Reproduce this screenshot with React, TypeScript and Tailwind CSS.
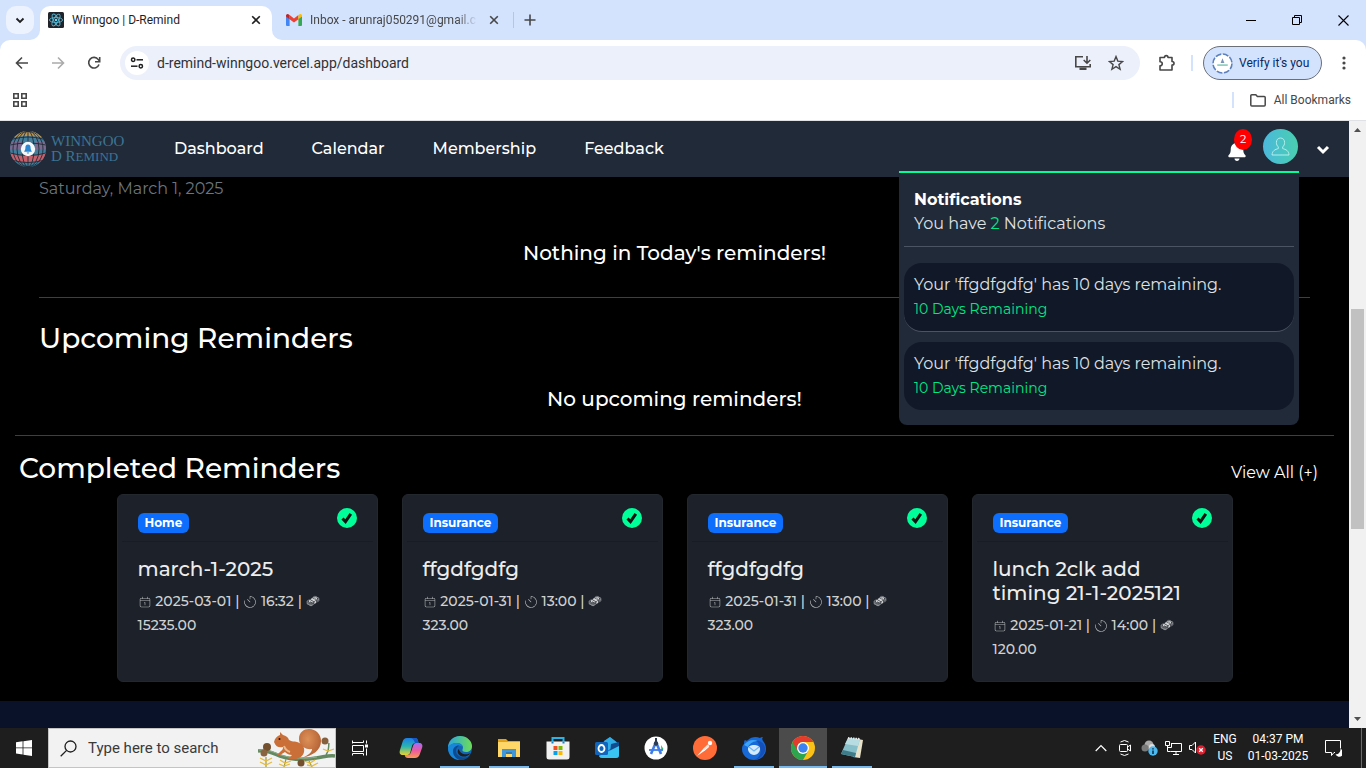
import React from "react";
import { FaBell } from "react-icons/fa";
import { CiCalendarDate, CiTimer } from "react-icons/ci";
import { GiMoneyStack } from "react-icons/gi";

type Reminder = {
  category: string;
  title: string;
  date: string;
  time: string;
  amount: string;
};

const reminders: Reminder[] = [
  { category: "Home", title: "march-1-2025", date: "2025-03-01", time: "16:32", amount: "15235.00" },
  { category: "Insurance", title: "ffgdfgdfg", date: "2025-01-31", time: "13:00", amount: "323.00" },
  { category: "Insurance", title: "ffgdfgdfg", date: "2025-01-31", time: "13:00", amount: "323.00" },
  { category: "Insurance", title: "lunch 2clk add timing 21-1-2025121", date: "2025-01-21", time: "14:00", amount: "120.00" },
];

const notifications = [
  { text: "Your 'ffgdfgdfg' has 10 days remaining.", left: "10 Days Remaining" },
  { text: "Your 'ffgdfgdfg' has 10 days remaining.", left: "10 Days Remaining" },
];

function ReactLogo() {
  return (
    <svg width="16" height="16" viewBox="0 0 16 16" aria-hidden="true">
      <rect width="16" height="16" rx="1.5" fill="#20232a" />
      <g fill="none" stroke="#58b4cf" strokeWidth="0.9">
        <ellipse cx="8" cy="8" rx="6.6" ry="2.5" />
        <ellipse cx="8" cy="8" rx="6.6" ry="2.5" transform="rotate(60 8 8)" />
        <ellipse cx="8" cy="8" rx="6.6" ry="2.5" transform="rotate(120 8 8)" />
      </g>
      <circle cx="8" cy="8" r="1.3" fill="#61dafb" />
    </svg>
  );
}

function GmailLogo() {
  return (
    <svg width="16" height="12" viewBox="0 0 16 12" aria-hidden="true">
      <path d="M0 2v9a1 1 0 0 0 1 1h2.6V4.6L0 2z" fill="#4285f4" />
      <path d="M16 2v9a1 1 0 0 1-1 1h-2.6V4.6L16 2z" fill="#34a853" />
      <path d="M3.6 1v4.2L8 8.6l4.4-3.4V1L8 4.4z" fill="#ea4335" />
      <path d="M0 1.8v.8l3.6 2.7V1L2.6.4C1.5-.4 0 .4 0 1.8z" fill="#c5221f" />
      <path d="M16 1.8v.8l-3.6 2.7V1l1-.6C14.5-.4 16 .4 16 1.8z" fill="#fbbc04" />
    </svg>
  );
}

function CloseIcon() {
  return (
    <svg width="10" height="10" viewBox="0 0 10 10" aria-hidden="true">
      <path d="M1.2 1.2l7.6 7.6M8.8 1.2L1.2 8.8" stroke="currentColor" strokeWidth="1.6" fill="none" />
    </svg>
  );
}

function TabStrip() {
  return (
    <div className="flex h-10 shrink-0 items-stretch bg-[#d3e2fd]">
      <div className="flex w-10 shrink-0 items-center pl-1.5">
        <button aria-label="Search tabs" className="flex h-7 w-7 items-center justify-center rounded-[10px] bg-[#ecf2fe] text-[#1f1f1f]">
          <svg width="10" height="7" viewBox="0 0 10 7" aria-hidden="true">
            <path d="M1.5 1.5L5 5l3.500-3.500" stroke="currentColor" strokeWidth="1.8" fill="none" />
          </svg>
        </button>
      </div>
      <div className="relative mt-1.5 flex w-[232px] shrink-0 items-center rounded-t-[10px] bg-white pb-1.5 pl-2 pr-[11px]">
        <svg className="absolute -left-2.5 bottom-0" width="10" height="10" viewBox="0 0 10 10" aria-hidden="true">
          <path d="M10 0v10H0A10 10 0 0 0 10 0z" fill="#fff" />
        </svg>
        <svg className="absolute -right-2.5 bottom-0" width="10" height="10" viewBox="0 0 10 10" aria-hidden="true">
          <path d="M0 0v10h10A10 10 0 0 1 0 0z" fill="#fff" />
        </svg>
        <ReactLogo />
        <span className="ml-2 flex-1 text-xs text-[#1f1f1f]">Winngoo | D-Remind</span>
        <button aria-label="Close tab" className="text-[#1f1f1f]"><CloseIcon /></button>
      </div>
      <div className="flex w-[241px] shrink-0 items-center pl-3.5 pr-3.5">
        <GmailLogo />
        <span className="ml-2 min-w-0 flex-1 whitespace-nowrap text-xs text-[#474747] [mask-image:linear-gradient(to_right,black_88%,transparent)]">
          Inbox - arunraj050291@gmail.c
        </span>
        <button aria-label="Close tab" className="ml-3 text-[#474747]"><CloseIcon /></button>
      </div>
      <div className="flex items-center gap-2.5">
        <span className="h-4 w-px bg-[#a8c7fa]" />
        <button aria-label="New tab" className="text-[#474747]">
          <svg width="12" height="12" viewBox="0 0 12 12" aria-hidden="true">
            <path d="M6 .5v11M.5 6h11" stroke="currentColor" strokeWidth="1.6" />
          </svg>
        </button>
      </div>
      <div className="ml-auto flex items-stretch text-black">
        <button aria-label="Minimize" className="flex w-[46px] items-center justify-center">
          <svg width="10" height="10" viewBox="0 0 10 10" aria-hidden="true"><path d="M0 5.5h10" stroke="currentColor" /></svg>
        </button>
        <button aria-label="Restore" className="flex w-[46px] items-center justify-center">
          <svg width="10" height="10" viewBox="0 0 10 10" aria-hidden="true">
            <path d="M.5 2.5h7v7h-7zM2.5 2.5v-2h7v7h-2" stroke="currentColor" fill="none" />
          </svg>
        </button>
        <button aria-label="Close window" className="flex w-[46px] items-center justify-center">
          <svg width="11" height="11" viewBox="0 0 11 11" aria-hidden="true"><path d="M.5.5l10 10M10.5.5l-10 10" stroke="currentColor" strokeWidth="1.1" /></svg>
        </button>
      </div>
    </div>
  );
}

function Toolbar() {
  return (
    <div className="flex h-[46px] shrink-0 items-center pl-2.5 pr-3 text-[#474747]">
      <button aria-label="Back" className="flex w-6 justify-center">
        <svg width="14" height="14" viewBox="0 0 14 14" aria-hidden="true"><path d="M13 7H2M7 1.5L1.5 7 7 12.5" stroke="currentColor" strokeWidth="1.6" fill="none" /></svg>
      </button>
      <button aria-label="Forward" className="ml-3 flex w-6 justify-center text-[#ababab]">
        <svg width="14" height="14" viewBox="0 0 14 14" aria-hidden="true"><path d="M1 7h11M7 1.5L12.5 7 7 12.5" stroke="currentColor" strokeWidth="1.6" fill="none" /></svg>
      </button>
      <button aria-label="Reload" className="ml-3 flex w-6 justify-center">
        <svg width="14" height="14" viewBox="0 0 14 14" aria-hidden="true">
          <path d="M12 8.5A5.3 5.3 0 1 1 11.3 3.6L12.5 5" stroke="currentColor" strokeWidth="1.6" fill="none" />
          <path d="M12.7 1v4.7H8" stroke="currentColor" strokeWidth="1.6" fill="none" />
        </svg>
      </button>
      <div className="ml-3.5 flex h-[34px] min-w-0 flex-1 items-center rounded-full bg-[#ecf0fa] pl-[5px] pr-4">
        <button aria-label="Site information" className="flex h-6 w-6 shrink-0 items-center justify-center rounded-full bg-white text-[#1f1f1f]">
          <svg width="14" height="14" viewBox="0 0 14 14" aria-hidden="true">
            <g stroke="currentColor" strokeWidth="1.5" fill="none">
              <circle cx="3.2" cy="3.8" r="1.7" /><path d="M6.5 3.8H13" />
              <circle cx="10.8" cy="10.2" r="1.7" /><path d="M1 10.2h6.5" />
            </g>
          </svg>
        </button>
        <input aria-label="Address" readOnly value="d-remind-winngoo.vercel.app/dashboard" className="ml-2 min-w-0 flex-1 bg-transparent text-sm text-[#303236] outline-none" />
        <button aria-label="Install app">
          <svg width="18" height="16" viewBox="0 0 18 16" aria-hidden="true">
            <path d="M9 1.8H1.8v10h14.4V9" stroke="currentColor" strokeWidth="1.6" fill="none" />
            <path d="M5.5 12.5h7V15h-7z" fill="currentColor" />
            <path d="M13 1v7M9.7 5L13 8.2 16.3 5" stroke="currentColor" strokeWidth="1.6" fill="none" />
          </svg>
        </button>
        <button aria-label="Bookmark this tab" className="ml-4">
          <svg width="16" height="16" viewBox="0 0 16 16" aria-hidden="true">
            <path d="M8 1.6l1.8 4.5 4.8.4-3.7 3.1 1.2 4.7L8 11.7l-4.1 2.6 1.2-4.7-3.7-3.1 4.8-.4z" stroke="currentColor" strokeWidth="1.4" fill="none" />
          </svg>
        </button>
      </div>
      <button aria-label="Extensions" className="ml-[18px]">
        <svg width="18" height="18" viewBox="0 0 18 18" aria-hidden="true">
          <path d="M2 3.5h4.500C6.500 1 10 1 10 3.500h4v4c2.700 0 2.700 3.600 0 3.600V16H2v-4.200c3 0 3-4 0-4z" stroke="currentColor" strokeWidth="1.6" fill="none" strokeLinejoin="round" />
        </svg>
      </button>
      <span className="ml-[15px] h-4 w-0.5 bg-[#d3e2fd]" />
      <button className="ml-2.5 flex h-[34px] w-[119px] items-center gap-1.5 rounded-full border border-[#6b7078] bg-[#d3e2fd] pl-2 text-xs text-[#0a2a5e]">
        <svg width="21" height="21" viewBox="0 0 20 20" aria-hidden="true">
          <circle cx="10" cy="10" r="9" fill="#fff" />
          <circle cx="10" cy="10" r="9" fill="none" stroke="#5b80bd" strokeWidth="1.5" strokeDasharray="5.6 1.47" />
          <path d="M10 5l1.8 4.5H8.200z" fill="#7c93b8" />
          <path d="M5 11.5h10" stroke="#6fc3ad" strokeWidth="1.3" />
        </svg>
        <span className="whitespace-nowrap">Verify it's you</span>
      </button>
      <button aria-label="Chrome menu" className="ml-3 flex w-5 justify-center">
        <svg width="4" height="14" viewBox="0 0 4 14" fill="currentColor" aria-hidden="true"><circle cx="2" cy="2" r="1.6" /><circle cx="2" cy="7" r="1.6" /><circle cx="2" cy="12" r="1.6" /></svg>
      </button>
    </div>
  );
}

function BookmarksBar() {
  return (
    <div className="flex h-[34px] shrink-0 items-center pb-1.5 pl-[13px] pr-[15px] text-[#474747]">
      <button aria-label="Tab groups">
        <svg width="14" height="14" viewBox="0 0 14 14" aria-hidden="true">
          <path d="M.8.8h4.400v4.400H.8zM8.800.8h4.400v4.400H8.800zM.8 8.800h4.400v4.400H.8zM8.800 8.800h4.400v4.400H8.800z" stroke="currentColor" strokeWidth="1.6" fill="none" />
        </svg>
      </button>
      <span className="ml-auto h-4 w-0.5 bg-[#d3e2fd]" />
      <button className="ml-4 flex items-center gap-2 text-xs">
        <svg width="16" height="13" viewBox="0 0 16 13" aria-hidden="true">
          <path d="M.8 11V1.800a1 1 0 0 1 1-1h4l1.600 1.800h6.800a1 1 0 0 1 1 1V11a1 1 0 0 1-1 1H1.800a1 1 0 0 1-1-1z" stroke="currentColor" strokeWidth="1.5" fill="none" />
        </svg>
        All Bookmarks
      </button>
    </div>
  );
}

function GlobeLogo() {
  return (
    <svg width="36" height="36" viewBox="0 0 36 36" aria-hidden="true">
      <defs><clipPath id="globe"><circle cx="18" cy="18" r="18" /></clipPath></defs>
      <g clipPath="url(#globe)">
        <rect width="36" height="36" fill="#427f9d" />
        <path d="M0 0h36v7q-18-4-36 0z" fill="#bd9650" />
        <path d="M0 10h11v8H0zM25 10h11v8H25z" fill="#7a6a90" />
        <path d="M0 22q18 5 36 0v7q-18 5-36 0z" fill="#c4616c" />
        <g fill="none" stroke="#212a38" strokeWidth="0.9">
          <path d="M3 8q15-4 30 0M0 14q18-4 36 0M0 22q18 5 36 0M2 29q16 5 32 0" />
          <path d="M18 0v36" />
          <ellipse cx="18" cy="18" rx="6" ry="18" />
          <ellipse cx="18" cy="18" rx="11" ry="18" />
          <ellipse cx="18" cy="18" rx="15" ry="18" />
        </g>
      </g>
      <circle cx="18" cy="18" r="7.2" fill="#f4f8fb" />
      <path d="M18 13.5c-2 0-2.600 1.600-2.600 3.400 0 2-1 2.600-1.300 3.800h7.800c-.3-1.200-1.300-1.800-1.300-3.800 0-1.800-.6-3.400-2.600-3.400zM16.800 21.400h2.400c0 1.500-2.400 1.500-2.400 0z" fill="#2c86d1" />
    </svg>
  );
}

function NotificationPanel() {
  return (
    <section aria-label="Notifications" className="absolute right-[50px] top-[50px] z-10 w-[400px] rounded-b-lg border-t-2 border-[#00ff99] bg-[#212a38] px-[5px] pb-[15px] text-base text-[#dfe1e4]">
      <div className="border-b border-[#4b5462] px-2.5 pb-2.5 pt-[15px]">
        <h2 className="font-bold leading-6 text-white">Notifications</h2>
        <p className="leading-6">You have <span className="text-[#00e887]">2</span> Notifications</p>
      </div>
      <ul className="mt-4 flex flex-col gap-2.5">
        {notifications.map((n, i) => (
          <li key={i} className="rounded-[18px] border-b border-[#4b5462] bg-[#111827] px-2.5 py-2.5 last:border-b-0">
            <p className="leading-6">{n.text}</p>
            <p className="text-sm leading-6 text-[#00e887]">{n.left}</p>
          </li>
        ))}
      </ul>
    </section>
  );
}

function NavBar() {
  return (
    <header className="relative flex h-14 shrink-0 items-center bg-[#212a38] pl-2.5 pr-[19px]">
      <a href="#home" className="flex items-center gap-[5px]">
        <GlobeLogo />
        <span className="w-[75px] whitespace-nowrap font-['Liberation_Serif',serif] text-[15px] leading-[15px] text-[#3c7594]">
          WINNGOO<br />D R<span className="text-[13px]">EMIND</span>
        </span>
      </a>
      <nav className="ml-12 flex gap-12 text-base font-medium text-white">
        <a href="#dashboard">Dashboard</a>
        <a href="#calendar">Calendar</a>
        <a href="#membership">Membership</a>
        <a href="#feedback">Feedback</a>
      </nav>
      <button aria-label="2 notifications" className="relative ml-auto mt-1 text-white">
        <FaBell size={20} />
        <span className="absolute -top-3 left-[7px] flex h-[21px] w-[18px] items-center justify-center rounded-[50%] bg-[#ff0000] text-[11px]">2</span>
      </button>
      <button aria-label="Profile" className="mb-1.5 ml-4 flex h-[35px] w-[35px] items-center justify-center rounded-full bg-linear-to-r from-[#4cb8dc] to-[#49cfae] text-[#b5eeee]">
        <svg width="19" height="19" viewBox="0 0 19 19" fill="none" stroke="currentColor" aria-hidden="true">
          <path d="M9.5 1C7 1 5.400 2.900 5.400 5.400c0 2 .7 3.500 1.900 4.500v1.700c-3.200.9-6 1.900-6.300 6.400h17c-.3-4.500-3.100-5.500-6.300-6.400V9.900c1.200-1 1.900-2.500 1.900-4.500C13.600 2.900 12 1 9.500 1z" />
        </svg>
      </button>
      <button aria-label="Open profile menu" className="ml-[18px] mt-0.5 text-white">
        <svg width="14" height="10" viewBox="0 0 14 10" aria-hidden="true"><path d="M2 2l5 5 5-5" stroke="currentColor" strokeWidth="3" fill="none" /></svg>
      </button>
      <NotificationPanel />
    </header>
  );
}

function ReminderCard({ item }: { item: Reminder }) {
  return (
    <article className="h-[188px] w-[261px] shrink-0 rounded-md border border-[#23272e] bg-[#1d2129] px-1">
      <div className="flex items-start justify-between border-b border-[#191d23] px-4 pb-2 pt-[13px]">
        <span className="mt-[5px] rounded-md bg-[#0d6efd] px-[7px] text-xs font-bold leading-5 text-white">{item.category}</span>
        <svg width="20" height="20" viewBox="0 0 20 20" role="img" aria-label="Completed">
          <circle cx="10" cy="10" r="10" fill="#00ff99" />
          <path d="M5.5 10.5l3 3.200 5.300-7.800" stroke="#111" strokeWidth="3" fill="none" />
        </svg>
      </div>
      <div className="px-4 pt-[15px]">
        <h3 className="text-xl font-medium leading-6 text-[#eceded]">{item.title}</h3>
        <p className="mt-2 text-sm font-medium leading-6 text-[#cfd1d3]">
          <CiCalendarDate className="inline-block h-3.5 w-3.5 align-[-3px] text-[#b5b8bb]" /> {item.date} |{" "}
          <CiTimer className="inline-block h-3.5 w-3.5 align-[-3px] text-[#c5c8cb]" /> {item.time} |{" "}
          <GiMoneyStack className="inline-block h-3.5 w-3.5 align-[-2px]" />
          <br />
          {item.amount}
        </p>
      </div>
    </article>
  );
}

function Dashboard() {
  return (
    <main className="flex min-h-0 flex-1 flex-col bg-black text-white">
      <section className="mx-[39px] border-b border-[#3f3f3f] pb-8">
        <p className="text-base leading-6 text-[#6c757d]">Saturday, March 1, 2025</p>
        <p className="mt-10 text-center text-xl font-medium leading-6">Nothing in Today's reminders!</p>
      </section>
      <section className="mx-[15px] border-b border-[#3f3f3f] px-6 pb-6 pt-[23px]">
        <h2 className="text-[28px] font-medium leading-[34px]">Upcoming Reminders</h2>
        <p className="mt-8 text-center text-xl font-medium leading-6">No upcoming reminders!</p>
      </section>
      <section className="pb-[19px] pt-[15px]">
        <div className="flex items-center justify-between pl-[19px] pr-[31px]">
          <h2 className="text-[28px] font-medium leading-[34px]">Completed Reminders</h2>
          <a href="#completed" className="mt-2.5 leading-6">View All (+)</a>
        </div>
        <div className="mt-[9px] flex justify-center gap-6">
          {reminders.map((r, i) => <ReminderCard key={i} item={r} />)}
        </div>
      </section>
      <footer className="flex-1 bg-[#0a1229]" />
    </main>
  );
}

function PageScrollbar() {
  return (
    <div aria-hidden="true" className="flex w-[17px] shrink-0 flex-col items-center bg-[#f1f1f1] px-0.5 text-[#505050]">
      <svg className="h-[17px] w-[7px] shrink-0" viewBox="0 0 7 17"><path d="M0 11l3.500-4L7 11z" fill="currentColor" /></svg>
      <span className="flex-[171]" />
      <span className="w-full flex-[220] bg-[#c1c1c1]" />
      <span className="flex-[182]" />
      <svg className="h-[17px] w-[7px] shrink-0" viewBox="0 0 7 17"><path d="M0 6l3.500 4L7 6z" fill="currentColor" /></svg>
    </div>
  );
}

function Squirrel() {
  return (
    <svg width="77" height="38" viewBox="0 0 77 38" aria-hidden="true">
      <defs>
        <radialGradient id="tail" cx=".4" cy=".35" r=".8"><stop offset="0" stopColor="#dd9058" /><stop offset="1" stopColor="#a9552a" /></radialGradient>
      </defs>
      <path d="M0 22c9-1 14 2 22 5 12 4 25 4 36 2 8-1 13-3 19-2" stroke="#64885f" strokeWidth="3.5" fill="none" />
      <path d="M1 21c9-1 14 2 22 5 12 4 25 4 36 2" stroke="#8fae86" strokeWidth="1" fill="none" />
      <path d="M68 26c4-5 2-8 3-12" stroke="#64885f" strokeWidth="1.5" fill="none" />
      <path d="M8 28v10M28 30l-2 8M51 32l3 6" stroke="#9b9a3d" strokeWidth="1.2" fill="none" />
      <g stroke="#e6bb3f" strokeWidth="1.3" fill="none">
        <path d="M2 29l6 3 6-3M2 33l6 3 6-3M22 31l5 3 6-2M21 35l5 2 6-2M46 32l6 2 5-3M49 36l5 1 6-3M65 20l5 2 6-2" />
      </g>
      <circle cx="9" cy="18" r="4" fill="#74502f" /><circle cx="6" cy="24" r="3.5" fill="#8a6440" />
      <circle cx="43" cy="34" r="3.500" fill="#74502f" /><circle cx="67" cy="12" r="3.500" fill="#86603c" />
      <path d="M43 29c7-2 11-6 11-9-6 1-13-3-13-10C41 3 46 0 51 0c7 0 12 5 12 12 0 9-8 15-20 17z" fill="url(#tail)" />
      <path d="M16 13c1-4 3-6 6-7V3l3 3c3 1 5 2 6 5 3 2 5 1 8 2 6 2 8 6 7 10-1 4-4 6-8 7h-8l4-4c-3 0-5-1-7-3l-5 3-3 0 4-4c2-1 2-3 2-4-4 1-7 0-9-5z" fill="#ca6f38" />
      <path d="M26 17c1 3 3 5 6 6" stroke="#eeb98a" strokeWidth="2" fill="none" />
      <circle cx="21.500" cy="10" r="1" fill="#221100" />
    </svg>
  );
}

const appIcons: { name: string; open?: boolean; active?: boolean; art: React.ReactNode }[] = [
  {
    name: "Copilot",
    art: (
      <>
        <defs>
          <linearGradient id="cpA" x1="0" y1="0" x2="0" y2="1"><stop offset="0" stopColor="#1b7fe6" /><stop offset=".5" stopColor="#2bb4b0" /><stop offset="1" stopColor="#e8d32e" /></linearGradient>
          <linearGradient id="cpB" x1="0" y1="0" x2="0" y2="1"><stop offset="0" stopColor="#a56bf5" /><stop offset=".5" stopColor="#ec5aa0" /><stop offset="1" stopColor="#fb9a54" /></linearGradient>
        </defs>
        <path d="M8 2h8c2 0 2.500 1 3 3l.6 2h-3c-2 0-3 1-3.600 3l-1.600 6c-.5 2-1.500 3-3 3H4c-3 0-4-2-3-5l2.500-8C4.300 3.500 5.500 2 8 2z" fill="url(#cpA)" />
        <path d="M16 22H9c-2 0-3-1-3.300-3h2.700c2 0 3-1 3.600-3l2-6c.5-2 1.500-3 3-3h3c3 0 4 2 3 5l-2.500 7c-.8 2-2.500 3-4.500 3z" fill="url(#cpB)" />
        <path d="M10 2h6c2 0 2.500 1 3 3l.6 2h-3.600c-1-3-2-5-6-5z" fill="#1857c9" />
      </>
    ),
  },
  {
    name: "Microsoft Edge", open: true,
    art: (
      <>
        <defs><linearGradient id="edA" x1="0" y1="0" x2="1" y2="0"><stop offset="0" stopColor="#2aa5dc" /><stop offset="1" stopColor="#6ddd58" /></linearGradient></defs>
        <circle cx="12" cy="12" r="12" fill="#1265b5" />
        <path d="M0 12C0 5 5 0 12 0s12 5 12 10c0 4-3 6-6 6-3 0-4-1-3.500-2.500C16 11 14 7 9.500 7 5 7 1 9 0 12z" fill="url(#edA)" />
        <path d="M0 12c1-3.500 5-5 9-5 3 0 5 2 5.400 4-1-1-2-1.500-3.400-1.500-3 0-5 2.500-5 6 0 4 2.500 7 6 8.500C5 24 0 18.500 0 12z" fill="#1a86d8" />
        <path d="M11 9.500c-2 1.500-3 3-3 5.500 0 4 4 6.500 8 6.500 3 0 5-1 6.500-3-2 4-6 5.500-10.500 5.500-4-1-7-4.500-7-9 0-3.500 3-5.500 6-5.500z" fill="#0c4a91" />
        <path d="M11 13c0 3 3.500 5.300 7 5.300 2 0 3.500-.7 4.500-1.300-2 3-5.500 4-8 3.500-5-1-6-6-3.500-7.500z" fill="#1e1e1e" />
      </>
    ),
  },
  {
    name: "File Explorer", open: true,
    art: (
      <>
        <path d="M1 3h8l2 2h12v16H1z" fill="#e3a21a" />
        <path d="M1 6h22v15H1z" fill="#ffd768" />
        <path d="M5 13h14v8h-4v-3H9v3H5z" fill="#3f97d8" />
        <path d="M9 16h6v2H9z" fill="#2f79b5" />
      </>
    ),
  },
  {
    name: "Microsoft Store",
    art: (
      <>
        <path d="M6.500 7V2h11v5" stroke="#29b3e6" strokeWidth="2" fill="none" />
        <path d="M.5 5.500h23V21a2.500 2.500 0 0 1-2.500 2.500H3A2.500 2.500 0 0 1 .5 21z" fill="#f1f1f1" />
        <path d="M5.500 5.500h2v2h-2zM16.500 5.500h2v2h-2z" fill="#1a7fc0" />
        <path d="M7.500 10h4v4h-4z" fill="#f04f23" /><path d="M12.500 10h4v4h-4z" fill="#7eb900" />
        <path d="M7.500 15h4v4h-4z" fill="#08a1ec" /><path d="M12.500 15h4v4h-4z" fill="#fdb800" />
      </>
    ),
  },
  {
    name: "Outlook",
    art: (
      <>
        <path d="M4 9l11-8 9 7v11c0 2-1 3-3 3H7c-2 0-3-1-3-3z" fill="#1c6fc4" />
        <path d="M9 5l6-4 9 7-12 7z" fill="#30aee8" />
        <path d="M16 8l8-2v5l-9 6z" fill="#124c8f" />
        <path d="M24 10v9c0 2-1 3-3 3H7c-1.500 0-2.500-.7-3-2z" fill="#38c3f0" />
        <rect x="0" y="6" width="13" height="13" rx="1.500" fill="#1066bd" />
        <ellipse cx="6.500" cy="12.500" rx="3" ry="3.500" stroke="#fff" strokeWidth="1.800" fill="none" />
      </>
    ),
  },
  {
    name: "Android Studio",
    art: (
      <>
        <circle cx="12" cy="12" r="11.500" fill="#fff" />
        <path d="M17 9l2.500 4-2 3z" fill="#35b36f" />
        <path d="M12 6L7 18M12 6l5 12" stroke="#3f7de8" strokeWidth="2.600" fill="none" />
        <path d="M5 14h14" stroke="#3f7de8" strokeWidth="1.800" fill="none" />
        <path d="M12 2v5" stroke="#2d3b52" strokeWidth="2" /><circle cx="12" cy="7.500" r="2.200" fill="#2d3b52" />
      </>
    ),
  },
  {
    name: "Postman",
    art: (
      <>
        <circle cx="12" cy="12" r="12" fill="#ff6c37" />
        <path d="M4 20l7-8 4-3 1 2-4 3.500z" fill="#fff" /><circle cx="17" cy="7" r="2.200" fill="#fff" />
        <path d="M10 13.500l4.500-5 2 1.500-5 4z" fill="#ffe2d6" />
      </>
    ),
  },
  {
    name: "Thunderbird", open: true,
    art: (
      <>
        <path d="M3 4c1 1 2 1 3 0 3-3 8-4 12-2 1-1 2-1 3-1-1 1-1 2 0 4 2 2 3 5 3 8 0 6-5 11-12 11S0 19 0 13c0-3 1-4 2-5 0-2 0-3 1-4z" fill="#1669d6" />
        <path d="M14 4c6 1 10 5 9 11-2 6-7 9-11 9 8-3 9-12 2-20z" fill="#1450b8" />
        <path d="M2 9c4-5 9-6 14-4-4 0-8 2-10 6z" fill="#3ba4f5" />
        <path d="M6 13c0-3 3-4 6-4s6 1 6 4c0 3-3 6-6 6s-6-3-6-6z" fill="#d5ebfd" />
        <path d="M7 11l5 4 5-4" stroke="#6fb5f2" strokeWidth="1.200" fill="none" />
      </>
    ),
  },
  {
    name: "Google Chrome", open: true, active: true,
    art: (
      <>
        <circle cx="12" cy="12" r="12" fill="#fbc116" />
        <path d="M1.600 6A12 12 0 0 0 12 24l5.200-9L12 12z" fill="#2da44e" />
        <path d="M1.600 6A12 12 0 0 1 22.400 6H12a6 6 0 0 0-5.200 9z" fill="#e33b2e" />
        <circle cx="12" cy="12" r="6" fill="#fff" /><circle cx="12" cy="12" r="4.700" fill="#3c82f0" />
      </>
    ),
  },
  {
    name: "Notepad", open: true,
    art: (
      <>
        <path d="M18 3l5 1-3 18-7-1z" fill="#e9e2ca" />
        <path d="M8 2l12 1-5 18L1 18z" fill="#86bfca" />
        <path d="M8 2l12 1-2 7L5 8z" fill="#b7dde2" />
        <path d="M1 18l14 3 1-4L3 14z" fill="#3f7c8a" />
        <path d="M8 2l12 1" stroke="#e8e8e8" strokeWidth="2" strokeDasharray="1.500 1" />
      </>
    ),
  },
];

function Taskbar() {
  return (
    <footer className="flex h-10 shrink-0 items-stretch bg-[#1e1e1e] text-white">
      <button aria-label="Start" className="flex w-12 items-center justify-center">
        <svg width="16" height="16" viewBox="0 0 16 16" fill="#fff" aria-hidden="true"><path d="M0 2.200l6.600-.9v6.200H0zM7.400 1.200L16 0v7.500H7.400zM0 8.300h6.600v6.200L0 13.600zM7.400 8.300H16V16l-8.600-1.200z" /></svg>
      </button>
      <label className="flex w-72 items-center border border-[#c4c4c4] bg-[#f2f2f2] pl-[11px] text-[#1f1f1f]">
        <svg width="17" height="17" viewBox="0 0 17 17" aria-hidden="true"><circle cx="10.500" cy="6.500" r="5.500" stroke="currentColor" strokeWidth="1.300" fill="none" /><path d="M6.600 10.400L.7 16.300" stroke="currentColor" strokeWidth="1.300" /></svg>
        <input aria-label="Search" placeholder="Type here to search" className="ml-[11px] min-w-0 flex-1 bg-transparent text-[15px] outline-none placeholder:text-[#3a3a3a]" />
        <Squirrel />
      </label>
      <button aria-label="Task view" className="mr-[3px] flex w-12 items-center justify-center">
        <svg width="17" height="16" viewBox="0 0 17 16" stroke="#fff" fill="none" aria-hidden="true">
          <path d="M.5 3.500V.5M11.500.5v2h-11M.5 5.500h11v6H.5zM.5 15.500v-2h11v2M14.500.5v3M14.500 8.500v7" /><path d="M13 4.500h3v3h-3z" fill="#fff" stroke="none" />
        </svg>
      </button>
      <div className="flex gap-px">
        {appIcons.map((a) => (
          <button key={a.name} aria-label={a.name} className={a.active ? "flex w-12 flex-col items-center justify-between bg-[#4b4b4b]" : "flex w-12 flex-col items-center justify-between"}>
            <svg className="mt-2 shrink-0" width="24" height="24" viewBox="0 0 24 24" aria-hidden="true">{a.art}</svg>
            <span className={a.active ? "h-0.5 w-full bg-[#76b9ed]" : a.open ? "h-0.5 w-10 bg-[#76b9ed]" : "h-0.5 w-10"} />
          </button>
        ))}
      </div>
      <div className="ml-auto flex items-center text-xs">
        <button aria-label="Show hidden icons" className="flex w-6 justify-center">
          <svg width="12" height="8" viewBox="0 0 12 8" aria-hidden="true"><path d="M.7 7L6 1.500 11.300 7" stroke="#fff" strokeWidth="1.200" fill="none" /></svg>
        </button>
        <button aria-label="Meet now" className="flex w-6 justify-center">
          <svg width="12" height="16" viewBox="0 0 12 16" stroke="#fff" fill="none" aria-hidden="true"><path d="M1.500 4.500h6a1 1 0 0 1 1 1v5a1 1 0 0 1-1 1h-6a1 1 0 0 1-1-1v-5a1 1 0 0 1 1-1zM8.500 7L11.500 5v6l-3-2M1.500 2Q5.500-1 9.500 2M1.500 14q4 3 8 0" /></svg>
        </button>
        <button aria-label="Weather" className="flex w-6 justify-center">
          <svg width="17" height="16" viewBox="0 0 17 16" aria-hidden="true"><circle cx="8" cy="5" r="4.500" fill="#aaa" /><circle cx="4" cy="8" r="3.500" fill="#7a7a7a" /><circle cx="11" cy="7" r="3" fill="#e0e0e0" /><circle cx="12" cy="11" r="4.700" fill="#4cb8ee" /><path d="M12 8.200v1.300M12 10.500v3.500" stroke="#0a2a40" strokeWidth="1.500" /></svg>
        </button>
        <button aria-label="Network" className="flex w-6 justify-center">
          <svg width="17" height="14" viewBox="0 0 17 14" stroke="#fff" fill="none" aria-hidden="true"><path d="M6 2.500h10.500v8H5.500M8 13.500h6M11 10.500v3M.5.500h4v4h-4zM2.500 4.500v6h3M6.500 2.500v4h-4" /></svg>
        </button>
        <button aria-label="Volume muted" className="flex w-6 justify-center">
          <svg width="17" height="16" viewBox="0 0 17 16" aria-hidden="true"><path d="M.5 5.500h2.500L6.500 2v11L3 9.500H.5z" stroke="#fff" fill="none" /><circle cx="12" cy="10" r="4.700" fill="#e02030" /><path d="M10.200 8.200l3.600 3.600M13.800 8.200l-3.600 3.600" stroke="#fff" strokeWidth="1.300" /></svg>
        </button>
        <button className="w-8 text-center leading-[17px]">ENG<br />US</button>
        <button className="ml-0.5 w-[70px] whitespace-nowrap text-center leading-[17px]">04:37 PM<br />01-03-2025</button>
        <button aria-label="Notifications" className="ml-1 flex w-8 justify-center">
          <svg width="17" height="17" viewBox="0 0 17 17" aria-hidden="true"><path d="M10 12.500H9L6.500 15.500v-3h-6v-12h15v8" stroke="#fff" fill="none" /><path d="M15.500 9a4 4 0 1 1-5 5.300c3 .2 5-2 5-5.300z" fill="#fff" /></svg>
        </button>
        <span className="ml-3 mr-1 h-10 w-px bg-[#6a6a6a]" />
      </div>
    </footer>
  );
}

export default function App() {
  return (
    <div className="flex h-screen flex-col overflow-hidden bg-white font-['Roboto','Open_Sans',sans-serif]">
      <TabStrip />
      <div className="shrink-0 bg-[#d3e2fd]">
        <div className="rounded-t-[10px] border-b border-[#dfe1e5] bg-white">
          <Toolbar />
          <BookmarksBar />
        </div>
      </div>
      <div className="flex min-h-0 flex-1">
        <div className="flex min-w-0 flex-1 flex-col font-['Montserrat','Inter',sans-serif]">
          <NavBar />
          <Dashboard />
        </div>
        <PageScrollbar />
      </div>
      <Taskbar />
    </div>
  );
}
